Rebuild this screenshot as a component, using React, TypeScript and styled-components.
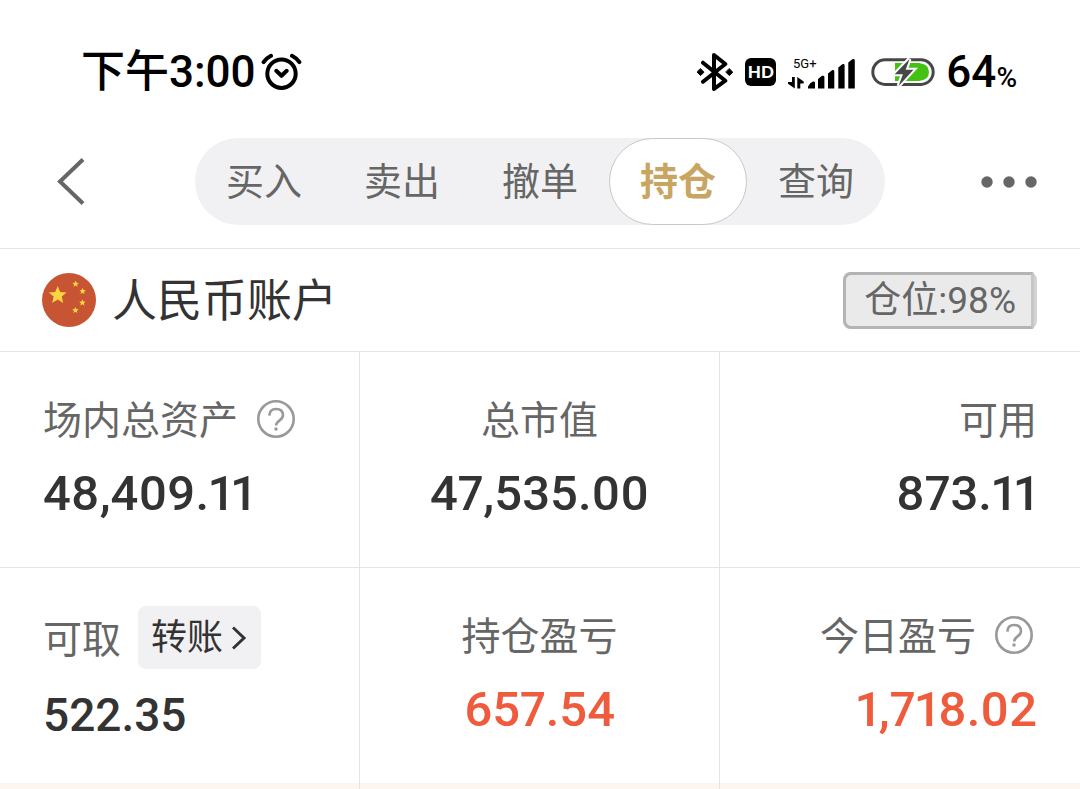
import React from "react";
import styled, { createGlobalStyle } from "styled-components";

const GlobalStyle = createGlobalStyle`
  * { box-sizing: border-box; }
  body {
    margin: 0;
    background: #fff;
    color: #333;
    font-family: Roboto, "Noto Sans CJK SC", sans-serif;
  }
  button {
    border: 0;
    padding: 0;
    background: none;
    color: inherit;
    font: inherit;
    cursor: pointer;
  }
  svg { display: block; flex: none; }
`;

const Page = styled.div`
  display: flex;
  flex-direction: column;
  min-height: 100vh;
`;

const StatusBar = styled.div`
  display: flex;
  align-items: center;
  justify-content: space-between;
  padding: 40px 63px 0 81px;
  height: 104px;
  color: #000;
`;

const Clock = styled.div`
  display: flex;
  align-items: center;
  gap: 5px;
  font-size: 44px;
  line-height: 64px;
  font-weight: 500;
`;

const Indicators = styled.div`
  display: flex;
  align-items: center;
  gap: 12px;
`;

const HdBadge = styled.span`
  width: 31px;
  height: 28px;
  border-radius: 6px;
  background: #000;
  color: #fff;
  font: 900 17px/28px Lato, sans-serif;
  text-align: center;
`;

const BatteryGroup = styled.div`
  display: flex;
  align-items: center;
  gap: 11px;
  margin-left: 4px;
`;

const BatteryLevel = styled.span`
  font-size: 44px;
  line-height: 64px;
  font-weight: 500;
  small {
    font-size: 28px;
    line-height: 1;
  }
`;

const Header = styled.header`
  display: grid;
  grid-template-columns: 1fr minmax(0, 690px) 1fr;
  align-items: center;
  padding: 34px 43px 23px;
  border-bottom: 1px solid #e4e4e4;
`;

const IconButton = styled.button<{ $end?: boolean }>`
  display: flex;
  align-items: center;
  justify-self: ${(p) => (p.$end ? "end" : "start")};
  height: 56px;
  padding-left: 12px;
`;

const Tabs = styled.nav`
  display: flex;
  border-radius: 44px;
  background: #f1f1f4;
`;

const Tab = styled.button<{ $active?: boolean }>`
  flex: 1;
  height: 87px;
  padding-bottom: 6px;
  border: 1px solid ${(p) => (p.$active ? "#c8c8ca" : "transparent")};
  border-radius: 44px;
  background: ${(p) => (p.$active ? "#fff" : "transparent")};
  color: ${(p) => (p.$active ? "#c9a562" : "#666")};
  font-size: 38px;
  font-weight: ${(p) => (p.$active ? 700 : 400)};
`;

const AccountBar = styled.section`
  display: flex;
  align-items: center;
  gap: 16px;
  height: 103px;
  padding: 0 43px 0 42px;
  border-bottom: 1px solid #e4e4e4;
`;

const AccountName = styled.h1`
  flex: 1;
  margin: 0;
  padding-top: 4px;
  font-size: 45px;
  line-height: 60px;
  font-weight: 400;
`;

const PositionBadge = styled.button`
  position: relative;
  height: 57px;
  padding: 0 18px;
  border: 3px solid #d3d3d3;
  border-radius: 8px;
  background: #eaeaea;
  color: #666;
  font-size: 37px;
  line-height: 51px;
  &::before {
    content: "";
    position: absolute;
    inset: -3px 0 -3px -3px;
    border: 3px solid #b4b4b4;
    border-right-color: #c6c6c6;
    border-radius: 8px 2px 2px 8px;
  }
`;

const Grid = styled.dl`
  display: grid;
  grid-template-columns: repeat(3, 1fr);
  margin: 0;
`;

const Cell = styled.div<{ $align?: "start" | "center" | "end"; $last?: boolean }>`
  display: flex;
  flex-direction: column;
  align-items: ${(p) => p.$align || "start"};
  gap: 16px;
  height: ${(p) => (p.$last ? 215 : 216)}px;
  padding: 38px 43px 0;
  border-right: ${(p) => (p.$align === "end" ? 0 : 1)}px solid #e4e4e4;
  border-bottom: ${(p) => (p.$last ? 0 : 1)}px solid #e4e4e4;
`;

const Label = styled.dt`
  display: flex;
  align-items: center;
  gap: 15px;
  min-height: 58px;
  color: #666;
  font-size: 39px;
  line-height: 54px;
  white-space: nowrap;
`;

const LabelText = styled.span`
  padding-top: 4px;
`;

const Value = styled.dd<{ $gain?: boolean; $small?: boolean }>`
  margin: 0;
  color: ${(p) => (p.$gain ? "#ee5b3d" : "#333")};
  font-size: ${(p) => (p.$small ? 46 : 49)}px;
  line-height: 60px;
  font-weight: 500;
  font-variant-numeric: proportional-nums;
`;

const HelpButton = styled.button`
  padding: 0 4px;
`;

const TransferButton = styled.button`
  display: flex;
  align-items: center;
  gap: 9px;
  height: 63px;
  margin-left: 2px;
  padding: 0 13px;
  border-radius: 8px;
  background: #f1f1f4;
  color: #333;
  font-size: 36px;
`;

const NoticeStrip = styled.div`
  flex: 1;
  display: grid;
  grid-template-columns: repeat(3, 1fr);
  min-height: 6px;
  background: #fdf6f0;
`;

const StripColumn = styled.span`
  border-right: 1px solid #e4e4e4;
  &:last-child { border-right: 0; }
`;

const starPoints = (cx: number, cy: number, r: number) =>
  Array.from({ length: 10 }, (_, i) => {
    const a = (Math.PI / 5) * i - Math.PI / 2;
    const d = i % 2 ? r * 0.45 : r;
    return `${cx + d * Math.cos(a)},${cy + d * Math.sin(a)}`;
  }).join(" ");

const AlarmIcon = () => (
  <svg width="41" height="38" viewBox="0 0 41 38" fill="none" stroke="#000" strokeWidth="4" strokeLinecap="round" strokeLinejoin="round">
    <circle cx="20.5" cy="20.7" r="14.2" />
    <path d="M2.6 9.2Q5.5 5 10 2.8M31 2.8Q35.5 5 38.4 9.2M15.3 17.8l5.2 5 5.2-5" />
  </svg>
);

const BluetoothIcon = () => (
  <svg width="36" height="38" viewBox="0 0 36 38" fill="none" stroke="#000" strokeWidth="4" strokeLinejoin="round" strokeLinecap="round">
    <path d="M6 9.7L28.3 27.7L17 36V2L28.3 11L6 28.7" />
    <path d="M3.6 15.8l3.4 3.4-3.4 3.4-3.4-3.4zM32.4 15.8l3.4 3.4-3.4 3.4-3.4-3.4z" fill="#000" strokeWidth="1" />
  </svg>
);

const SignalIcon = () => (
  <svg width="67" height="34" viewBox="0 0 67 34">
    <text x="5" y="13" fontSize="13" fontFamily="Roboto, sans-serif">5G+</text>
    <path d="M4 22h2.8v11.4L0 28.8V27h4zM9.3 33.4V22l6.4 4.6V28.4h-3.4v5z" />
    <path d="M20 33.4v-2q2-3.6 5-4.8q2-.4 2 1.4v5.4zM30 33.4V24l4-3.2q2.4-.6 2.4 1.2v11.4zM40 33.4V18.6l4-3.4q2.3-.7 2.3 1.2v17zM50.3 33.4V12.6l4-3.4q2.3-.7 2.3 1.2v23zM60.3 33.4V7.4l4-3.2q2.5-.7 2.5 1.2v28z" />
  </svg>
);

const BatteryIcon = () => (
  <svg width="64" height="32" viewBox="0 0 64 32">
    <path d="M24 7h24q10 1 10 9t-10 9H24z" fill="#43c211" />
    <rect x="1.8" y="3.8" width="60.4" height="24.6" rx="12.3" fill="none" stroke="#474747" strokeWidth="3" />
    <path d="M38.5 3L23.7 18.3h8.2L27.6 30L42.5 13.8h-7.8z" fill="#474747" stroke="#fff" strokeWidth="4" paintOrder="stroke" />
  </svg>
);

const BackIcon = () => (
  <svg width="32" height="50" viewBox="0 0 32 50" fill="none" stroke="#666" strokeWidth="4">
    <path d="M28 2.5L5 24.5L28 46.5" />
  </svg>
);

const MoreIcon = () => (
  <svg width="56" height="12" viewBox="0 0 56 12" fill="#666">
    <circle cx="6" cy="6" r="5.7" />
    <circle cx="28" cy="6" r="5.7" />
    <circle cx="50" cy="6" r="5.7" />
  </svg>
);

const FlagIcon = () => (
  <svg width="54" height="54" viewBox="0 0 54 54">
    <circle cx="27" cy="27" r="27" fill="#c75432" />
    <g fill="#f7d63f">
      <polygon points={starPoints(15.7, 22.3, 9.4)} />
      <polygon points={starPoints(33.6, 11, 3.4)} />
      <polygon points={starPoints(40.6, 18.2, 3.4)} />
      <polygon points={starPoints(40.4, 29.7, 3.4)} />
      <polygon points={starPoints(33.4, 37.3, 3.4)} />
    </g>
  </svg>
);

const HelpIcon = () => (
  <svg width="38" height="38" viewBox="0 0 38 38" fill="none" stroke="#999">
    <circle cx="19" cy="19" r="17.7" strokeWidth="2.6" />
    <path d="M12.4 15.6q.2-6.6 6.8-6.6t6.8 6q0 3-3.4 5.4t-3.4 5.2" strokeWidth="2.6" />
    <circle cx="19" cy="29" r="1.7" fill="#999" stroke="none" />
  </svg>
);

const ForwardIcon = () => (
  <svg width="16" height="26" viewBox="0 0 16 26" fill="none" stroke="#333" strokeWidth="3">
    <path d="M1 2.5L12 13L1 23.5" />
  </svg>
);

const tabs = ["买入", "卖出", "撤单", "持仓", "查询"];

const Help = ({ about }: { about: string }) => (
  <HelpButton type="button" aria-label={about}>
    <HelpIcon />
  </HelpButton>
);

export default function App() {
  return (
    <Page>
      <GlobalStyle />
      <StatusBar>
        <Clock>
          下午3:00
          <AlarmIcon />
        </Clock>
        <Indicators>
          <BluetoothIcon />
          <HdBadge>HD</HdBadge>
          <SignalIcon />
          <BatteryGroup>
            <BatteryIcon />
            <BatteryLevel>
              64<small>%</small>
            </BatteryLevel>
          </BatteryGroup>
        </Indicators>
      </StatusBar>
      <Header>
        <IconButton type="button" aria-label="返回">
          <BackIcon />
        </IconButton>
        <Tabs>
          {tabs.map((name) => (
            <Tab key={name} type="button" $active={name === "持仓"}>
              {name}
            </Tab>
          ))}
        </Tabs>
        <IconButton type="button" aria-label="更多" $end>
          <MoreIcon />
        </IconButton>
      </Header>
      <AccountBar>
        <FlagIcon />
        <AccountName>人民币账户</AccountName>
        <PositionBadge type="button">仓位:98%</PositionBadge>
      </AccountBar>
      <Grid>
        <Cell>
          <Label>
            <LabelText>场内总资产</LabelText>
            <Help about="场内总资产说明" />
          </Label>
          <Value>48,409.11</Value>
        </Cell>
        <Cell $align="center">
          <Label>
            <LabelText>总市值</LabelText>
          </Label>
          <Value>47,535.00</Value>
        </Cell>
        <Cell $align="end">
          <Label>
            <LabelText>可用</LabelText>
          </Label>
          <Value>873.11</Value>
        </Cell>
        <Cell $last>
          <Label>
            <LabelText>可取</LabelText>
            <TransferButton type="button">
              转账
              <ForwardIcon />
            </TransferButton>
          </Label>
          <Value $small>522.35</Value>
        </Cell>
        <Cell $align="center" $last>
          <Label>
            <LabelText>持仓盈亏</LabelText>
          </Label>
          <Value $gain>657.54</Value>
        </Cell>
        <Cell $align="end" $last>
          <Label>
            <LabelText>今日盈亏</LabelText>
            <Help about="今日盈亏说明" />
          </Label>
          <Value $gain>1,718.02</Value>
        </Cell>
      </Grid>
      <NoticeStrip>
        <StripColumn />
        <StripColumn />
        <StripColumn />
      </NoticeStrip>
    </Page>
  );
}
